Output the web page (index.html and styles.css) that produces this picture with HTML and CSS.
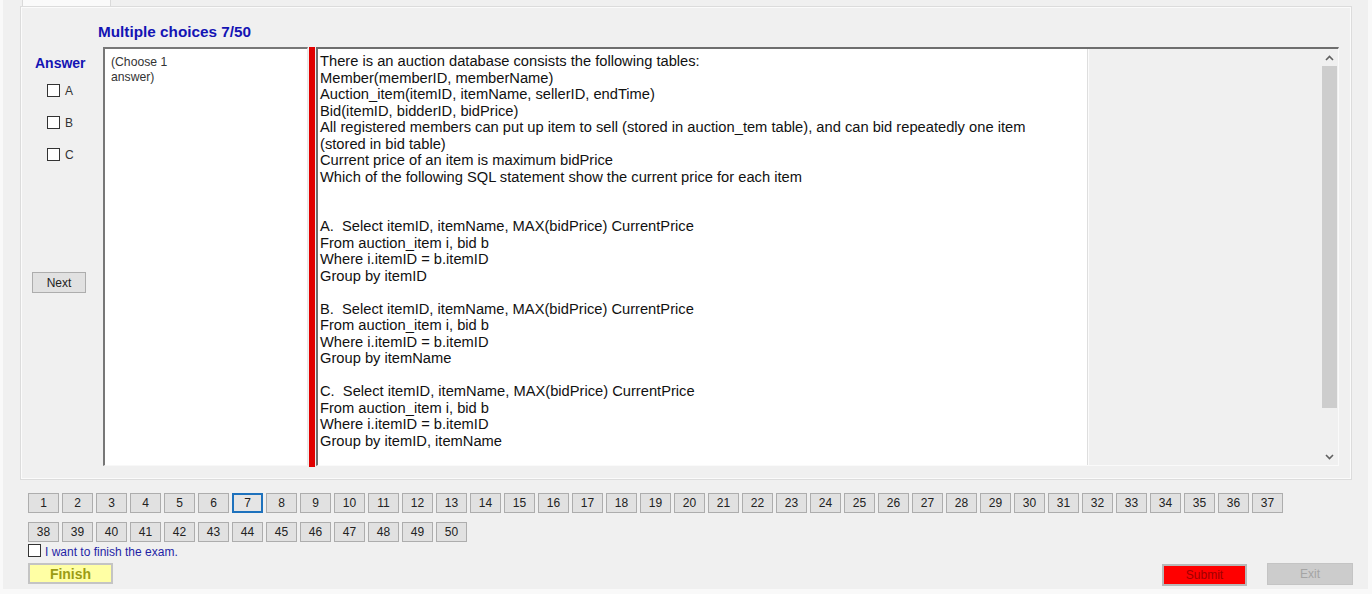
FILE: index.html
```html
<!DOCTYPE html>
<html>
<head>
<meta charset="utf-8">
<link rel="stylesheet" href="styles.css">
</head>
<body>
<div class="form">
  <div class="tabstrip"><div class="tab"></div></div>
  <div class="panel">
    <div class="title">Multiple choices 7/50</div>
    <div class="main">
      <div class="side">
        <div class="answer-label">Answer</div>
        <div class="opts">
          <div class="opt"><span class="cb"></span><span class="opt-l">A</span></div>
          <div class="opt"><span class="cb"></span><span class="opt-l">B</span></div>
          <div class="opt"><span class="cb"></span><span class="opt-l">C</span></div>
        </div>
        <div class="btn next">Next</div>
      </div>
      <div class="choose">(Choose 1<br>answer)</div>
      <div class="redbar"></div>
      <div class="rich">
        <div class="qtext">There is an auction database consists the following tables:
Member(memberID, memberName)
Auction_item(itemID, itemName, sellerID, endTime)
Bid(itemID, bidderID, bidPrice)
All registered members can put up item to sell (stored in auction_tem table), and can bid repeatedly one item
(stored in bid table)
Current price of an item is maximum bidPrice
Which of the following SQL statement show the current price for each item


A.  Select itemID, itemName, MAX(bidPrice) CurrentPrice
From auction_item i, bid b
Where i.itemID = b.itemID
Group by itemID

B.  Select itemID, itemName, MAX(bidPrice) CurrentPrice
From auction_item i, bid b
Where i.itemID = b.itemID
Group by itemName

C.  Select itemID, itemName, MAX(bidPrice) CurrentPrice
From auction_item i, bid b
Where i.itemID = b.itemID
Group by itemID, itemName</div>
        <div class="fill"></div>
        <div class="scroll">
          <div class="arrow"><svg width="9" height="6" viewBox="0 0 9 6"><path d="M1 5 L4.5 1.5 L8 5" fill="none" stroke="#606060" stroke-width="1.6"/></svg></div>
          <div class="thumb"></div>
          <div class="track"></div>
          <div class="arrow"><svg width="9" height="6" viewBox="0 0 9 6"><path d="M1 1 L4.5 4.5 L8 1" fill="none" stroke="#606060" stroke-width="1.6"/></svg></div>
        </div>
      </div>
    </div>
  </div>
  <div class="pager">
    <div class="pbtn">1</div><div class="pbtn">2</div><div class="pbtn">3</div><div class="pbtn">4</div><div class="pbtn">5</div><div class="pbtn">6</div><div class="pbtn current">7</div><div class="pbtn">8</div><div class="pbtn">9</div><div class="pbtn">10</div>
    <div class="pbtn">11</div><div class="pbtn">12</div><div class="pbtn">13</div><div class="pbtn">14</div><div class="pbtn">15</div><div class="pbtn">16</div><div class="pbtn">17</div><div class="pbtn">18</div><div class="pbtn">19</div><div class="pbtn">20</div>
    <div class="pbtn">21</div><div class="pbtn">22</div><div class="pbtn">23</div><div class="pbtn">24</div><div class="pbtn">25</div><div class="pbtn">26</div><div class="pbtn">27</div><div class="pbtn">28</div><div class="pbtn">29</div><div class="pbtn">30</div>
    <div class="pbtn">31</div><div class="pbtn">32</div><div class="pbtn">33</div><div class="pbtn">34</div><div class="pbtn">35</div><div class="pbtn">36</div><div class="pbtn">37</div><div class="pbtn">38</div><div class="pbtn">39</div><div class="pbtn">40</div>
    <div class="pbtn">41</div><div class="pbtn">42</div><div class="pbtn">43</div><div class="pbtn">44</div><div class="pbtn">45</div><div class="pbtn">46</div><div class="pbtn">47</div><div class="pbtn">48</div><div class="pbtn">49</div><div class="pbtn">50</div>
  </div>
  <div class="finish-check"><span class="cb"></span><span class="finish-l">I want to finish the exam.</span></div>
  <div class="actions">
    <div class="finish">Finish</div>
    <div class="submit">Submit</div>
    <div class="exit">Exit</div>
  </div>
</div>
</body>
</html>
```
FILE: styles.css
```css
html, body {
  margin: 0;
  padding: 0;
  background: #f9f9f9;
  font-family: "Liberation Sans", Arial, sans-serif;
}
.form {
  width: 1365px;
  height: 589px;
  margin-left: 3px;
  background: #f0f0f0;
  padding-left: 17px;
  box-sizing: border-box;
  display: flex;
  flex-direction: column;
}
.tabstrip {
  height: 6px;
  display: flex;
}
.tab {
  margin-left: 2px;
  width: 87px;
  background: #fafafa;
  border-left: 1px solid #dadada;
  border-right: 1px solid #dadada;
}
.panel {
  width: 1332px;
  height: 474px;
  box-sizing: border-box;
  border: 1px solid #dcdcdc;
  box-shadow: inset 0 0 0 1px #fbfbfb;
  display: flex;
  flex-direction: column;
}
.title {
  margin-top: 16px;
  margin-left: 77px;
  font-weight: bold;
  font-size: 15.3px;
  line-height: 18px;
  color: #1414b4;
}
.main {
  margin-top: 6px;
  height: 419px;
  display: flex;
}
.side {
  width: 82px;
  display: flex;
  flex-direction: column;
}
.answer-label {
  margin-top: 8px;
  margin-left: 14px;
  font-weight: bold;
  font-size: 14px;
  line-height: 17px;
  color: #1414b4;
}
.opts {
  margin-top: 12px;
  margin-left: 26px;
  display: flex;
  flex-direction: column;
  gap: 19px;
}
.opt {
  display: flex;
  align-items: center;
  height: 13px;
}
.cb {
  display: block;
  width: 11px;
  height: 11px;
  border: 1px solid #333;
  background: #fff;
  flex: none;
}
.opt-l {
  margin-left: 5px;
  font-size: 12px;
  color: #333;
}
.btn {
  box-sizing: border-box;
  background: #e1e1e1;
  border: 1px solid #adadad;
  font-size: 12px;
  color: #222;
  display: flex;
  align-items: center;
  justify-content: center;
}
.next {
  margin-top: 111px;
  margin-left: 11px;
  width: 54px;
  height: 21px;
}
.choose {
  width: 205px;
  box-sizing: border-box;
  background: #fff;
  border-top: 2px solid #777;
  border-left: 2px solid #777;
  border-right: 1px solid #e8e8e8;
  border-bottom: 1px solid #f8f8f8;
  padding: 6px 0 0 6px;
  font-size: 12.2px;
  line-height: 14.5px;
  color: #333;
}
.redbar {
  width: 6px;
  margin-left: 1px;
  background: #e00000;
  height: 420px;
}
.rich {
  margin-left: 1px;
  width: 1023px;
  box-sizing: border-box;
  border-top: 2px solid #6e6e6e;
  border-left: 2px solid #6e6e6e;
  border-right: 1px solid #fafafa;
  border-bottom: 1px solid #fafafa;
  display: flex;
}
.qtext {
  width: 770px;
  box-sizing: border-box;
  background: #fff;
  border-right: 1px solid #dedede;
  padding: 4px 0 0 2px;
  white-space: pre;
  font-size: 14.7px;
  line-height: 16.5px;
  color: #111;
  overflow: hidden;
}
.fill {
  flex: 1;
  background: #f0f0f0;
  border-left: 1px solid #fbfbfb;
}
.scroll {
  width: 17px;
  display: flex;
  flex-direction: column;
  background: #f0f0f0;
}
.arrow {
  height: 17px;
  display: flex;
  align-items: center;
  justify-content: center;
}
.thumb {
  height: 342px;
  margin: 0 1px;
  background: #cdcdcd;
}
.track {
  flex: 1;
}
.pager {
  margin-top: 13px;
  margin-left: 8px;
  width: 1260px;
  display: flex;
  flex-wrap: wrap;
  gap: 9px 3px;
}
.pbtn {
  width: 31px;
  height: 20px;
  box-sizing: border-box;
  background: #e1e1e1;
  border: 1px solid #adadad;
  font-size: 12px;
  color: #222;
  display: flex;
  align-items: center;
  justify-content: center;
}
.pbtn.current {
  border: 2px solid #1e72bd;
  background: #e5e5e5;
}
.finish-check {
  margin-top: 2px;
  margin-left: 8px;
  display: flex;
  align-items: center;
  height: 13px;
}
.finish-l {
  margin-left: 4px;
  margin-top: 3px;
  font-size: 12px;
  color: #1f1fa6;
}
.actions {
  margin-top: 6px;
  padding-left: 8px;
  padding-right: 15px;
  display: flex;
  align-items: flex-start;
}
.finish {
  width: 85px;
  height: 21px;
  box-sizing: border-box;
  background: #ffffa4;
  border: 2px solid #c4c4c4;
  font-weight: bold;
  font-size: 14px;
  color: #9c9c14;
  display: flex;
  align-items: center;
  justify-content: center;
}
.submit {
  margin-left: auto;
  margin-top: 1px;
  width: 85px;
  height: 22px;
  box-sizing: border-box;
  background: #ff0000;
  border: 2px solid #b8b8b8;
  font-size: 12px;
  color: #a00000;
  display: flex;
  align-items: center;
  justify-content: center;
}
.exit {
  margin-left: 20px;
  width: 86px;
  height: 22px;
  box-sizing: border-box;
  background: #cccccc;
  border: 1px solid #c4c4c4;
  font-size: 12px;
  color: #a4a4a4;
  display: flex;
  align-items: center;
  justify-content: center;
}
```
